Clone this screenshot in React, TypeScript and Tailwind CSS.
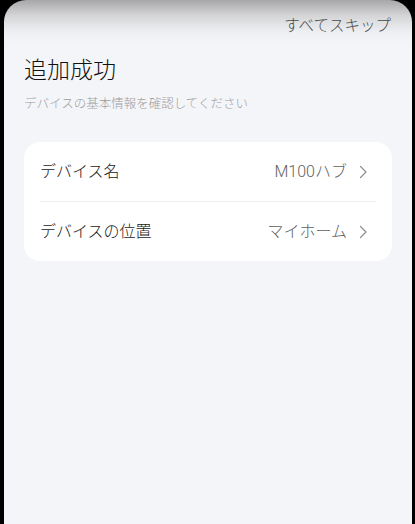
import React from "react";

const font = { fontFamily: 'Roboto, "Noto Sans CJK JP", "Noto Sans", sans-serif' };

function Chevron() {
  return (
    <svg width="9" height="14" viewBox="0 0 9 14" fill="none" className="ml-[12px]">
      <path d="M1.5 1.5L7 7L1.5 12.5" stroke="#8f8f8f" strokeWidth="1.2" strokeLinecap="round" strokeLinejoin="round" />
    </svg>
  );
}

function Row({ label, value }: { label: string; value: string }) {
  return (
    <div className="flex h-[59px] items-center justify-between">
      <span className="text-[16px] font-light text-[#1a1a1a]">{label}</span>
      <div className="flex items-center">
        <span className="text-[16px] font-light text-[#5f5f5f]">{value}</span>
        <Chevron />
      </div>
    </div>
  );
}

export default function App() {
  return (
    <div className="h-[524px] w-[415px] bg-black pl-[4px] pr-[3px]" style={font}>
      <div className="h-full w-full overflow-hidden rounded-t-[22px] bg-[linear-gradient(to_bottom,#a7a7a9_0px,#d6d6d8_16px,#eeeff2_32px,#f4f5f9_44px)]">
        <div className="flex justify-end pr-[21px] pt-[15px]">
          <span className="text-[15.5px] font-light leading-[22px] text-[#4a4a4a]">すべてスキップ</span>
        </div>
        <div className="px-[20px] pt-[18px]">
          <h1 className="text-[23px] font-light leading-[32px] text-[#111]">追加成功</h1>
          <p className="mt-[9px] text-[12.5px] font-light leading-[16px] text-[#9d9d9d]">デバイスの基本情報を確認してください</p>
          <div className="mt-[30px] rounded-[16px] bg-white pl-[16px] pr-[24px]">
            <Row label="デバイス名" value="M100ハブ" />
            <div className="mr-[-8px] h-px bg-[#eeeeee]" />
            <Row label="デバイスの位置" value="マイホーム" />
          </div>
        </div>
      </div>
    </div>
  );
}
